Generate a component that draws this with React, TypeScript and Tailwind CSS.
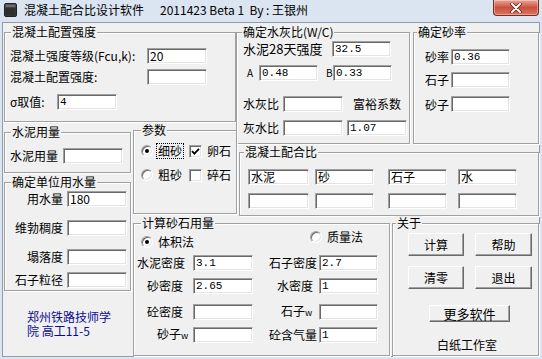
import React from "react";

const editBase =
  "flex h-[16px] shrink-0 items-center overflow-hidden whitespace-nowrap border border-t-[#a0a0a0] border-l-[#a0a0a0] border-r-white border-b-white bg-white pl-[2px] leading-[12px] shadow-[inset_1px_1px_0_#696969,inset_-1px_-1px_0_#e3e3e3]";

function Edit({ w, v, mono }: { w: string; v?: string; mono?: boolean }) {
  return (
    <div
      className={`${editBase} ${w} ${
        mono ? "font-['Liberation_Mono',monospace] text-[11px]" : "text-[12px]"
      }`}
    >
      {v}
    </div>
  );
}

function Group({
  title,
  pos,
  lab,
  children,
}: {
  title: string;
  pos: string;
  lab: string;
  children?: React.ReactNode;
}) {
  return (
    <div
      className={`relative mt-[6px] border border-[#a0a0a0] shadow-[inset_1px_1px_0_#fff,1px_1px_0_#fff] ${pos}`}
    >
      <span
        className={`absolute top-[-8px] whitespace-nowrap bg-[#f0f0f0] px-px text-[12px] leading-[14px] ${lab}`}
      >
        {title}
      </span>
      {children}
    </div>
  );
}

function Radio({ checked }: { checked?: boolean }) {
  return (
    <span className="flex h-[12px] w-[12px] shrink-0 items-center justify-center rounded-full border border-t-[#a0a0a0] border-l-[#a0a0a0] border-r-white border-b-white bg-white shadow-[inset_1px_1px_0_#696969,inset_-1px_-1px_0_#e3e3e3]">
      {checked && <span className="h-[4px] w-[4px] rounded-full bg-black" />}
    </span>
  );
}

function Check({ checked }: { checked?: boolean }) {
  return (
    <span className="flex h-[13px] w-[13px] shrink-0 items-center justify-center border border-t-[#a0a0a0] border-l-[#a0a0a0] border-r-white border-b-white bg-white shadow-[inset_1px_1px_0_#696969,inset_-1px_-1px_0_#e3e3e3]">
      {checked && (
        <svg width="9" height="9" viewBox="0 0 9 9">
          <path d="M1 4.2 L3.4 6.6 L8 1.8" fill="none" stroke="#000" strokeWidth="1.8" />
        </svg>
      )}
    </span>
  );
}

function Btn({ w, h, label, text }: { w: string; h: string; label: string; text?: string }) {
  return (
    <div
      className={`flex shrink-0 items-center justify-center border border-t-white border-l-white border-r-[#696969] border-b-[#696969] bg-[#f0f0f0] shadow-[inset_-1px_-1px_0_#a0a0a0] ${w} ${h} ${
        text ?? "text-[12px]"
      }`}
    >
      {label}
    </div>
  );
}

const row = "flex h-[16px] items-center";
const lbl = "shrink-0 whitespace-nowrap";

function WLabel({ t }: { t: string }) {
  if (t.endsWith("w")) {
    return (
      <>
        {t.slice(0, -1)}
        <span className="text-[9px]">w</span>
      </>
    );
  }
  return <>{t}</>;
}

export default function App() {
  return (
    <div className="flex h-[359px] w-[542px] flex-col overflow-hidden bg-[#dae5f1] font-['Noto_Sans_CJK_SC','Noto_Sans',sans-serif] text-black">
      {/* title bar */}
      <div className="flex h-[22px] shrink-0 items-start">
        <svg className="ml-[4px] mt-[3px]" width="13" height="14" viewBox="0 0 13 14">
          <rect x="0.5" y="0.5" width="12" height="13" rx="1.5" fill="#3c3c3c" stroke="#222" />
          <rect x="1.5" y="1.5" width="10" height="3" fill="#6b6b6b" />
          <rect x="1.5" y="4.5" width="10" height="8" fill="#2f2f2f" />
        </svg>
        <div className="ml-[7px] mt-[2px] flex whitespace-pre text-[12px] leading-[16px]">
          <span>混凝土配合比设计软件</span>
          <span className="ml-[16px]">2011423 Beta 1  By : 王银州</span>
        </div>
        <div className="ml-auto mr-[3px] flex h-[16px] w-[46px] items-center justify-center rounded-b-[4px] border border-t-0 border-[#7d2a1d] bg-gradient-to-b from-[#e7a498] via-[#c9503d] to-[#d8765f] shadow-[inset_0_0_0_1px_rgba(255,255,255,0.35)]">
          <svg width="12" height="10" viewBox="0 0 12 10">
            <path d="M2 1 L10 9 M10 1 L2 9" stroke="#5a1a10" strokeWidth="3.4" strokeLinecap="round" />
            <path d="M2 1 L10 9 M10 1 L2 9" stroke="#fff" strokeWidth="2" strokeLinecap="round" />
          </svg>
        </div>
      </div>

      {/* client */}
      <div className="mx-[2px] mb-[2px] flex-1 border border-[#8f9caa] bg-[#f0f0f0] pl-px pt-[3px]">
        <div className="grid grid-cols-[127px_2px_103px_1px_2px_151px_2px_18px_3px_126px] grid-rows-[96px_2px_2px_18px_2px_27px_3px_38px_2px_1px_74px_65px] text-[12px] leading-[14px]">
          {/* 混凝土配置强度 */}
          <Group title="混凝土配置强度" pos="col-start-1 col-end-4 row-start-1 row-end-2" lab="left-[6px]">
            <div className="flex flex-col pl-[5px] pt-[15px]">
              <div className={row}>
                <span className={`${lbl} w-[137px]`}>混凝土强度等级(Fcu,k):</span>
                <Edit w="w-[60px]" v="20" />
              </div>
              <div className={`${row} mt-[5px]`}>
                <span className={`${lbl} w-[137px]`}>混凝土配置强度:</span>
                <Edit w="w-[60px]" />
              </div>
              <div className={`${row} mt-[9px]`}>
                <span className={`${lbl} w-[47px]`}>σ取值:</span>
                <Edit w="w-[60px]" v="4" mono />
              </div>
            </div>
          </Group>

          {/* 确定水灰比 */}
          <Group title="确定水灰比(W/C)" pos="col-start-4 col-end-9 row-start-1 row-end-5" lab="left-[5px]">
            <div className="flex flex-col pl-[6px] pt-[8px]">
              <div className={row}>
                <span className={`${lbl} w-[89px] text-[13px]`}>水泥28天强度</span>
                <Edit w="w-[59px]" v="32.5" mono />
              </div>
              <div className={`${row} mt-[8px] pl-[4px]`}>
                <span className={`${lbl} w-[12px] text-[10px]`}>A</span>
                <Edit w="w-[59px]" v="0.48" mono />
                <span className={`${lbl} ml-[8px] w-[7px] text-[10px]`}>B</span>
                <Edit w="w-[59px]" v="0.33" mono />
              </div>
              <div className={`${row} mt-[15px]`}>
                <span className={`${lbl} w-[40px]`}>水灰比</span>
                <Edit w="w-[60px]" />
                <span className={`${lbl} ml-[10px]`}>富裕系数</span>
              </div>
              <div className={`${row} mt-[8px]`}>
                <span className={`${lbl} w-[40px]`}>灰水比</span>
                <Edit w="w-[60px]" />
                <div className="ml-[4px]">
                  <Edit w="w-[60px]" v="1.07" mono />
                </div>
              </div>
            </div>
          </Group>

          {/* 确定砂率 */}
          <Group title="确定砂率" pos="col-start-10 col-end-11 row-start-1 row-end-5" lab="left-[3px]">
            <div className="flex flex-col pl-[11px] pt-[16px]">
              <div className={row}>
                <span className={`${lbl} w-[26px]`}>砂率</span>
                <Edit w="w-[59px]" v="0.36" mono />
              </div>
              <div className={`${row} mt-[7px]`}>
                <span className={`${lbl} w-[26px]`}>石子</span>
                <Edit w="w-[59px]" />
              </div>
              <div className={`${row} mt-[8px] items-end`}>
                <span className={`${lbl} w-[26px]`}>砂子</span>
                <Edit w="w-[59px]" />
              </div>
            </div>
          </Group>

          {/* 水泥用量 */}
          <Group title="水泥用量" pos="col-start-1 col-end-2 row-start-4 row-end-7" lab="left-[6px]">
            <div className={`${row} ml-[5px] mt-[15px]`}>
              <span className={`${lbl} w-[53px]`}>水泥用量</span>
              <Edit w="w-[60px]" />
            </div>
          </Group>

          {/* 参数 */}
          <Group title="参数" pos="col-start-3 col-end-5 row-start-3 row-end-9" lab="left-[7px]">
            <div className="flex flex-col pl-[7px] pt-[12px]">
              <div className={row}>
                <Radio checked />
                <span className="ml-[3px] flex h-[16px] w-[28px] items-center justify-center border border-dotted border-black">细砂</span>
                <span className="ml-[5px]">
                  <Check checked />
                </span>
                <span className={`${lbl} ml-[5px]`}>卵石</span>
              </div>
              <div className={`${row} mt-[8px]`}>
                <Radio />
                <span className="ml-[3px] flex h-[16px] w-[28px] items-center justify-center">粗砂</span>
                <span className="ml-[5px]">
                  <Check />
                </span>
                <span className={`${lbl} ml-[5px]`}>碎石</span>
              </div>
            </div>
          </Group>

          {/* 混凝土配合比 */}
          <Group title="混凝土配合比" pos="col-start-6 col-end-11 row-start-6 row-end-10" lab="left-[4px]">
            <div className="flex flex-col pl-[8px] pt-[16px]">
              <div className="flex">
                <Edit w="w-[61px]" v="水泥" />
                <div className="ml-[6px]">
                  <Edit w="w-[59px]" v="砂" />
                </div>
                <div className="ml-[14px]">
                  <Edit w="w-[59px]" v="石子" />
                </div>
                <div className="ml-[11px]">
                  <Edit w="w-[59px]" v="水" />
                </div>
              </div>
              <div className="mt-[8px] flex">
                <Edit w="w-[61px]" />
                <div className="ml-[6px]">
                  <Edit w="w-[59px]" />
                </div>
                <div className="ml-[14px]">
                  <Edit w="w-[59px]" />
                </div>
                <div className="ml-[11px]">
                  <Edit w="w-[59px]" />
                </div>
              </div>
            </div>
          </Group>

          {/* 确定单位用水量 */}
          <Group title="确定单位用水量" pos="col-start-1 col-end-2 row-start-8 row-end-12" lab="left-[6px]">
            <div className="flex flex-col pt-[8px]">
              <div className={row}>
                <span className={`${lbl} w-[62px] pr-[4px] text-right`}>用水量</span>
                <Edit w="w-[60px]" v="180" />
              </div>
              <div className={`${row} mt-[13px]`}>
                <span className={`${lbl} w-[62px] pr-[4px] text-right`}>维勃稠度</span>
                <Edit w="w-[60px]" />
              </div>
              <div className={`${row} mt-[13px]`}>
                <span className={`${lbl} w-[62px] pr-[4px] text-right`}>塌落度</span>
                <Edit w="w-[60px]" />
              </div>
              <div className={`${row} mt-[7px]`}>
                <span className={`${lbl} w-[62px] pr-[4px] text-right`}>石子粒径</span>
                <Edit w="w-[60px]" />
              </div>
            </div>
          </Group>

          {/* school label */}
          <div className="col-start-1 col-end-2 row-start-12 row-end-13 pl-[23px] pt-[19px]">
            <div className="w-[86px] text-[12px] leading-[14px] text-[#0a0a96]">郑州铁路技师学院 高工11-5</div>
          </div>

          {/* 计算砂石用量 */}
          <Group title="计算砂石用量" pos="col-start-3 col-end-7 row-start-11 row-end-13" lab="left-[7px]">
            <div className="flex flex-col pt-[5px]">
              <div className="flex h-[22px] items-start">
                <div className="mt-[5px] flex h-[16px] w-[176px] items-center pl-[7px]">
                  <Radio checked />
                  <span className="ml-[5px]">体积法</span>
                </div>
                <div className="flex h-[16px] items-center">
                  <Radio />
                  <span className="ml-[5px]">质量法</span>
                </div>
              </div>
              {[
                ["水泥密度", "pl-[3px]", "3.1", "石子密度", "pl-[16px]", "2.7", "mt-[4px]"],
                ["砂密度", "pl-[13px]", "2.65", "水密度", "pl-[24px]", "1", "mt-[7px]"],
                ["砼密度", "pl-[13px]", "", "石子w", "pl-[28px]", "", "mt-[10px]"],
                ["砂子w", "pl-[23px]", "", "砼含气量", "pl-[16px]", "1", "mt-[7px]"],
              ].map(([a, pa, va, b, pb, vb, mt]) => (
                <div key={a} className={`${row} ${mt}`}>
                  <span className={`${lbl} w-[59px] ${pa}`}>
                    <WLabel t={a} />
                  </span>
                  <Edit w="w-[60px]" v={va} mono />
                  <span className={`${lbl} w-[66px] ${pb}`}>
                    <WLabel t={b} />
                  </span>
                  <Edit w="w-[59px]" v={vb} mono />
                </div>
              ))}
            </div>
          </Group>

          {/* 关于 */}
          <Group title="关于" pos="col-start-8 col-end-11 row-start-11 row-end-13" lab="left-[3px]">
            <div className="flex flex-col pl-[15px] pt-[9px]">
              <div className="flex">
                <Btn w="w-[56px]" h="h-[23px]" label="计算" />
                <div className="ml-[11px]">
                  <Btn w="w-[57px]" h="h-[23px]" label="帮助" />
                </div>
              </div>
              <div className="mt-[10px] flex">
                <Btn w="w-[56px]" h="h-[23px]" label="清零" />
                <div className="ml-[11px]">
                  <Btn w="w-[57px]" h="h-[23px]" label="退出" />
                </div>
              </div>
              <div className="ml-[21px] mt-[16px]">
                <Btn w="w-[81px]" h="h-[17px]" label="更多软件" text="text-[13px]" />
              </div>
              <div className="ml-[29px] mt-[16px] whitespace-nowrap text-[12px] leading-[13px]">白纸工作室</div>
            </div>
          </Group>
        </div>
      </div>
    </div>
  );
}
